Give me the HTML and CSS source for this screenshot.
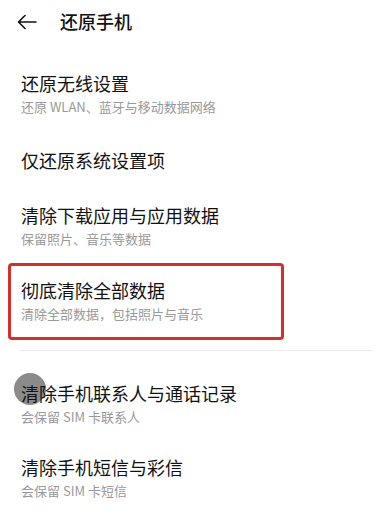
FILE: index.html
```html
<!DOCTYPE html>
<html lang="zh-CN">
<head>
    <meta charset="UTF-8">
    <meta name="viewport" content="width=device-width, initial-scale=1.0">
    <title>还原手机</title>
    <link rel="stylesheet" href="styles.css">
</head>
<body>
    <div class="header">
        <svg class="back" width="20" height="16" viewBox="0 0 20 16">
            <path d="M19 8H2M8 1.5L1.5 8L8 14.5" fill="none" stroke="#111" stroke-width="1.6" stroke-linecap="round" stroke-linejoin="round"/>
        </svg>
        <div class="title">还原手机</div>
    </div>
    <div class="list">
        <div class="item">
            <div class="name">还原无线设置</div>
            <div class="sub">还原 WLAN、蓝牙与移动数据网络</div>
        </div>
        <div class="item single">
            <div class="name">仅还原系统设置项</div>
        </div>
        <div class="item">
            <div class="name">清除下载应用与应用数据</div>
            <div class="sub">保留照片、音乐等数据</div>
        </div>
        <div class="item marked">
            <div class="name">彻底清除全部数据</div>
            <div class="sub">清除全部数据，包括照片与音乐</div>
        </div>
        <div class="divider"></div>
        <div class="item touch">
            <div class="dot"></div>
            <div class="name">清除手机联系人与通话记录</div>
            <div class="sub">会保留 SIM 卡联系人</div>
        </div>
        <div class="item">
            <div class="name">清除手机短信与彩信</div>
            <div class="sub">会保留 SIM 卡短信</div>
        </div>
    </div>
</body>
</html>
```

FILE: styles.css
```css
* {
    box-sizing: border-box;
}
body {
    margin: 0;
    background-color: #fff;
    font-family: "Noto Sans CJK SC", "Noto Sans", sans-serif;
    color: #111;
}
.header {
    height: 42px;
    display: flex;
    align-items: center;
    padding-left: 17px;
}
.header .back {
    margin-right: 23px;
    margin-top: 2px;
}
.header .title {
    font-size: 18px;
    font-weight: 500;
}
.list {
    padding-top: 15px;
}
.item {
    position: relative;
    padding: 14px 21px;
}
.item.single {
    height: 58px;
    display: flex;
    align-items: center;
}
.item .name {
    position: relative;
    font-size: 18px;
    line-height: 24px;
}
.item .sub {
    margin-top: 2px;
    font-size: 13px;
    line-height: 20px;
    color: #999;
}
.item.marked {
    margin: 0 98px 0 8px;
    padding: 12px 10px 13px;
    border: 3px solid #d3302a;
    border-radius: 4px;
}
.divider {
    height: 1px;
    margin: 10px 10px 16px 20px;
    background-color: #ececec;
}
.item .dot {
    position: absolute;
    left: 14px;
    top: 6px;
    width: 32px;
    height: 32px;
    border-radius: 50%;
    background-color: rgba(110, 110, 110, 0.8);
}
```
